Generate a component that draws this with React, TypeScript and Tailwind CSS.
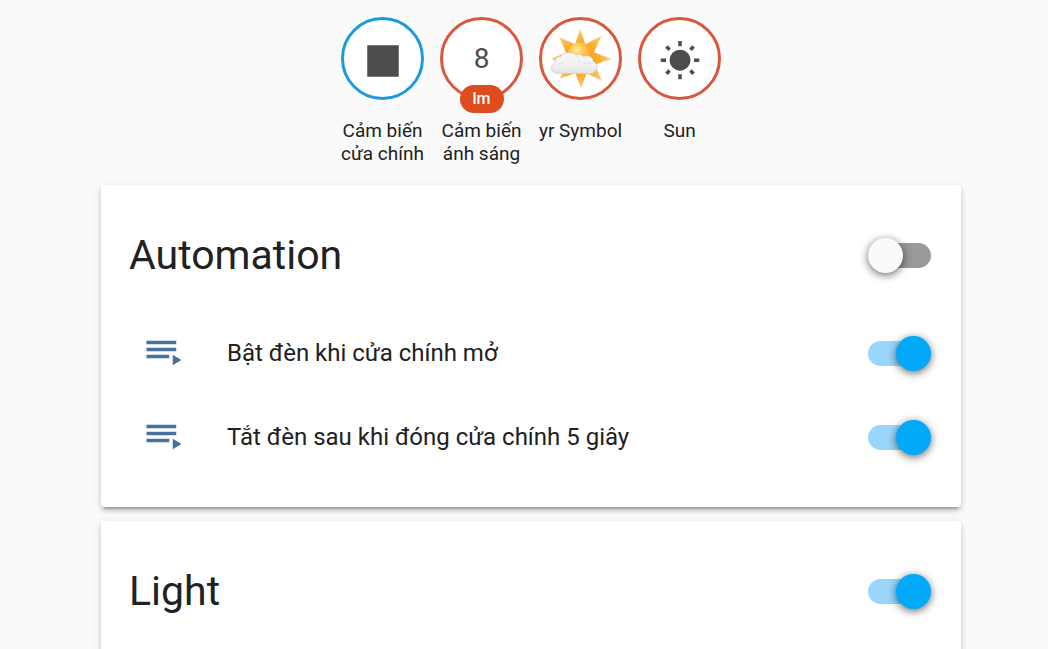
import type { ReactNode } from "react";
import { clsx } from "clsx";

function MdiIcon({ path, className }: { path: string; className?: string }) {
  return (
    <svg viewBox="0 0 24 24" fill="currentColor" aria-hidden="true" className={clsx("size-[42px] shrink-0", className)}>
      <path d={path} />
    </svg>
  );
}

const icons = {
  square: "M3,3V21H21V3",
  sunny:
    "M3.55,18.54L4.96,19.95L6.76,18.16L5.34,16.74M11,22.45C11.32,22.45 13,22.45 13,22.45V19.5H11M12,5.5A6,6 0 0,0 6,11.5A6,6 0 0,0 12,17.5A6,6 0 0,0 18,11.5C18,8.18 15.31,5.5 12,5.5M20,12.5H23V10.5H20M17.24,18.16L19.04,19.95L20.45,18.54L18.66,16.74M20.45,4.46L19.04,3.05L17.24,4.84L18.66,6.26M13,0.55H11V3.5H13M4,10.5H1V12.5H4M6.76,4.84L4.96,3.05L3.55,4.46L5.34,6.26",
  playlistPlay: "M19,9H2V11H19V9M19,5H2V7H19V5M2,15H15V13H2V15M17,13V19L22,16L17,13Z",
};

function PartlyCloudy() {
  return (
    <svg viewBox="60 70 186 186" aria-hidden="true" className="size-[62px]">
      <defs>
        <radialGradient id="rays" cx="151" cy="162" r="92" gradientUnits="userSpaceOnUse">
          <stop offset="0.35" stopColor="#f8a31c" />
          <stop offset="0.65" stopColor="#fab437" />
          <stop offset="1" stopColor="#fbd587" />
        </radialGradient>
        <radialGradient id="disc" cx="141" cy="136" r="38" gradientUnits="userSpaceOnUse">
          <stop offset="0" stopColor="#fde9a0" />
          <stop offset="0.5" stopColor="#fccb55" />
          <stop offset="1" stopColor="#f9ad2b" />
        </radialGradient>
        <linearGradient id="cloud" x1="0" y1="0" x2="0" y2="1">
          <stop offset="0" stopColor="#f7f7f7" />
          <stop offset="0.6" stopColor="#f1f1f1" />
          <stop offset="1" stopColor="#e2e2e4" />
        </linearGradient>
      </defs>
      <path
        fill="url(#rays)"
        d="M151 73L166 119L215 93L192 143L244 163L194 180L216 229L170 206L153 251L136 206L89 222L109 182L63 162L108 144L88 98L135 119Z"
      />
      <circle cx="148" cy="146" r="33" fill="url(#disc)" />
      <path
        fill="url(#cloud)"
        stroke="#cdcdd0"
        strokeWidth="2"
        d="M79 206C60 204 58 182 74 176C73 161 83 155 92 156C98 142 127 140 137 151C148 147 156 150 159 156C174 149 190 158 189 170C202 176 204 190 198 197C194 206 187 207 179 207Z"
      />
      <path fill="none" stroke="#e0e0e2" strokeWidth="3" d="M84 179C91 173 98 175 103 180M137 152C146 157 149 165 146 173M158 180C166 173 177 173 184 179" />
    </svg>
  );
}

interface BadgeProps {
  label: string;
  unit?: string;
  blue?: boolean;
  children: ReactNode;
}

function Badge({ label, unit, blue, children }: BadgeProps) {
  return (
    <a href="#" className="flex w-[83px] flex-col items-center">
      <span
        className={clsx(
          "relative flex size-[83px] items-center justify-center rounded-full border-3 bg-white text-[28px] text-[#4c4c4c]",
          blue ? "border-[#1c9bdb]" : "border-[#d9573a]",
        )}
      >
        {children}
        {unit && (
          <span className="absolute -bottom-4 left-1/2 -translate-x-1/2 rounded-full bg-[#df4c1e] px-[13px] text-base leading-[28px] font-medium text-white">
            {unit}
          </span>
        )}
      </span>
      <span className="-mx-2 mt-[19px] text-center text-[19px] leading-[23px]">{label}</span>
    </a>
  );
}

function Toggle({ label, on = false }: { label: string; on?: boolean }) {
  return (
    <input
      type="checkbox"
      role="switch"
      aria-label={label}
      defaultChecked={on}
      className="flex h-[25px] w-[63px] shrink-0 cursor-pointer appearance-none items-center rounded-full bg-[#999999] before:size-[35px] before:shrink-0 before:rounded-full before:bg-[#fafafa] before:shadow-[0_2px_9px_rgba(0,0,0,0.6)] before:content-[''] checked:bg-[#9ad6fb] checked:before:ml-7 checked:before:bg-[#03a9f9]"
    />
  );
}

interface CardProps {
  title: string;
  on?: boolean;
  items: string[];
}

function Card({ title, on, items }: CardProps) {
  return (
    <section className="rounded bg-white pb-7 shadow-[0_4px_4px_rgba(0,0,0,0.14),0_2px_9px_rgba(0,0,0,0.12),0_5px_2px_-3px_rgba(0,0,0,0.2)]">
      <header className="flex items-center justify-between pt-[35px] pr-[30px] pb-[21px] pl-7">
        <h2 className="text-[41px] leading-[70px]">{title}</h2>
        <Toggle label={title} on={on} />
      </header>
      <ul>
        {items.map((item) => (
          <li key={item} className="flex h-[84px] items-center pr-[30px] pl-[42px]">
            <MdiIcon path={icons.playlistPlay} className="text-[#44739e]" />
            <span className="ml-[42px] flex-1 text-2xl">{item}</span>
            <Toggle label={item} on />
          </li>
        ))}
      </ul>
    </section>
  );
}

export default function App() {
  return (
    <main className="h-screen overflow-hidden bg-[#fafafa] pl-[14px] font-[Roboto,sans-serif] text-[#212121]">
      <div className="mx-auto max-w-[860px]">
        <div className="flex justify-center gap-4 pt-[17px]">
          <Badge label="Cảm biến cửa chính" blue>
            <MdiIcon path={icons.square} className="mt-1" />
          </Badge>
          <Badge label="Cảm biến ánh sáng" unit="lm">
            8
          </Badge>
          <Badge label="yr Symbol">
            <PartlyCloudy />
          </Badge>
          <Badge label="Sun">
            <MdiIcon path={icons.sunny} className="mt-1" />
          </Badge>
        </div>
        <div className="mt-5 flex flex-col gap-[14px]">
          <Card title="Automation" items={["Bật đèn khi cửa chính mở", "Tắt đèn sau khi đóng cửa chính 5 giây"]} />
          <Card title="Light" on items={[]} />
        </div>
      </div>
    </main>
  );
}
